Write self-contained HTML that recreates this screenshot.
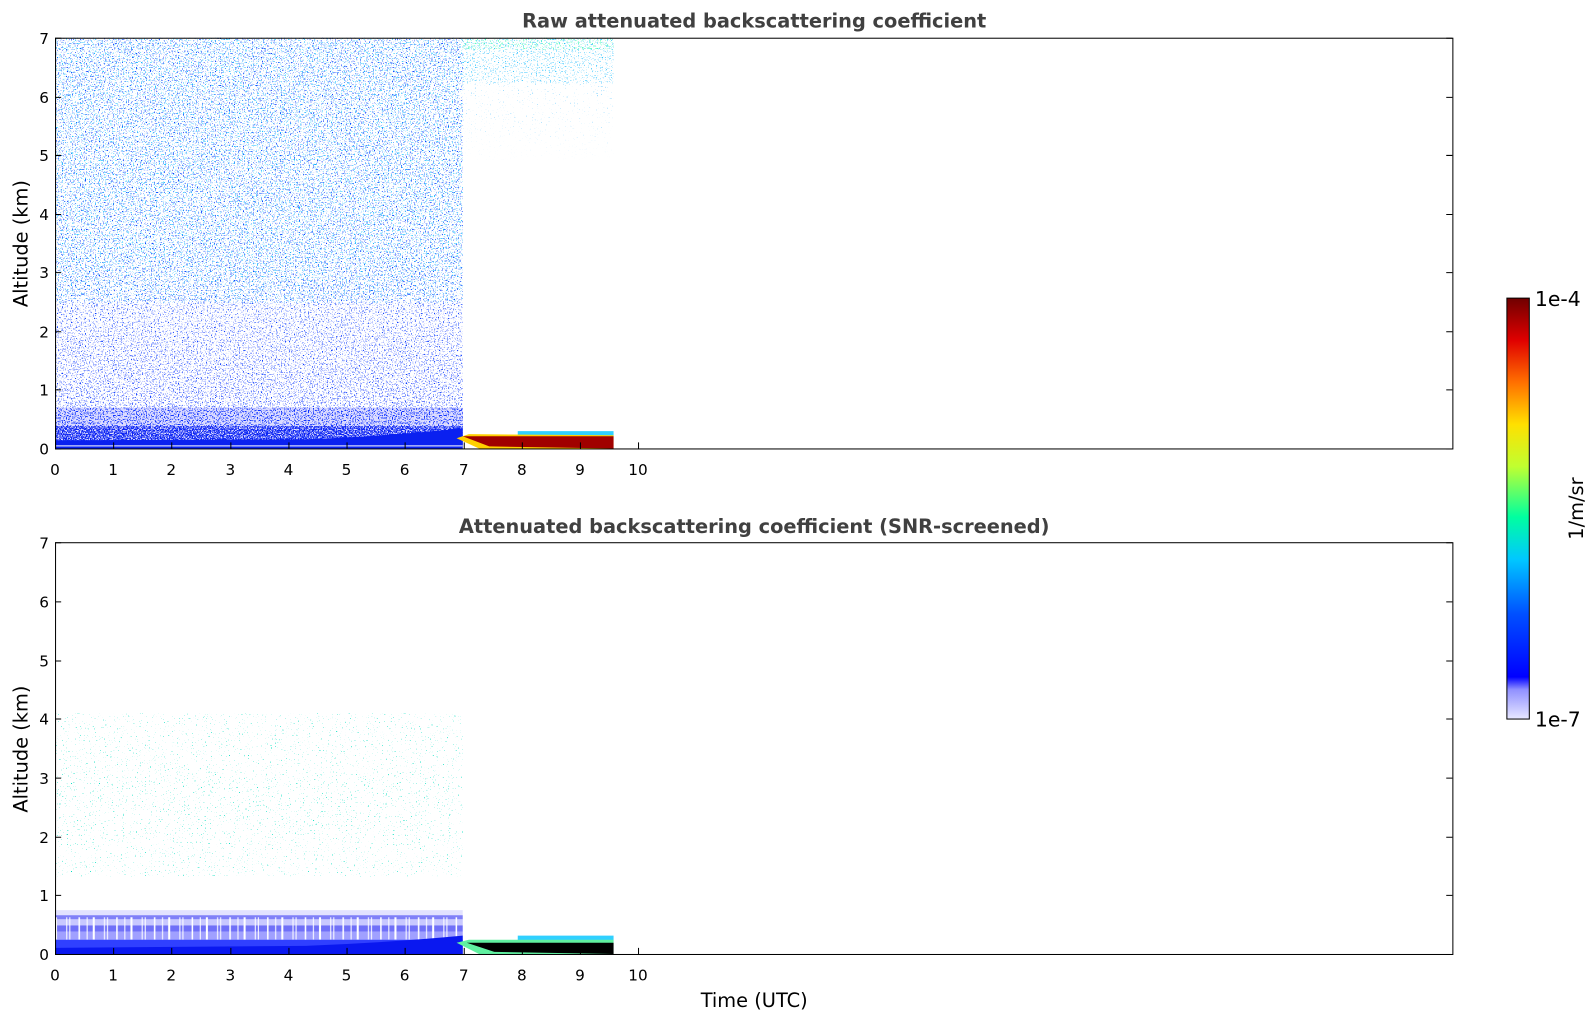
<!DOCTYPE html>
<html><head><meta charset="utf-8"><style>
html,body{margin:0;padding:0;background:#fff;width:1595px;height:1020px;overflow:hidden}
svg text{font-family:"DejaVu Sans","Liberation Sans",sans-serif}
</style></head><body>
<svg width="1595" height="1020" viewBox="0 0 1595 1020" xmlns="http://www.w3.org/2000/svg">
<defs>
<filter id="lo" x="0" y="0" width="100%" height="100%">
<feTurbulence type="fractalNoise" baseFrequency="0.8" numOctaves="1" seed="3" result="n"/>
<feColorMatrix in="n" type="matrix" values="0 0 0 0 0  0 0 0 0 0  0 0 0 0 0  16 0 0 0 -10" result="a"/>
<feComposite in="SourceGraphic" in2="a" operator="in"/>
</filter>
<filter id="lo2" x="0" y="0" width="100%" height="100%">
<feTurbulence type="fractalNoise" baseFrequency="0.8" numOctaves="1" seed="11" result="n"/>
<feColorMatrix in="n" type="matrix" values="0 0 0 0 0  0 0 0 0 0  0 0 0 0 0  16 0 0 0 -10.2" result="a"/>
<feComposite in="SourceGraphic" in2="a" operator="in"/>
</filter>
<filter id="vlo" x="0" y="0" width="100%" height="100%">
<feTurbulence type="fractalNoise" baseFrequency="0.8" numOctaves="1" seed="21" result="n"/>
<feColorMatrix in="n" type="matrix" values="0 0 0 0 0  0 0 0 0 0  0 0 0 0 0  18 0 0 0 -12.5" result="a"/>
<feComposite in="SourceGraphic" in2="a" operator="in"/>
</filter>
<filter id="mid" x="0" y="0" width="100%" height="100%">
<feTurbulence type="fractalNoise" baseFrequency="0.8" numOctaves="1" seed="5" result="n"/>
<feColorMatrix in="n" type="matrix" values="0 0 0 0 0  0 0 0 0 0  0 0 0 0 0  14 0 0 0 -7.6" result="a"/>
<feComposite in="SourceGraphic" in2="a" operator="in"/>
</filter>
<filter id="hi" x="0" y="0" width="100%" height="100%">
<feTurbulence type="fractalNoise" baseFrequency="0.8" numOctaves="1" seed="7" result="n"/>
<feColorMatrix in="n" type="matrix" values="0 0 0 0 0  0 0 0 0 0  0 0 0 0 0  12 0 0 0 -5.5" result="a"/>
<feComposite in="SourceGraphic" in2="a" operator="in"/>
</filter>
<linearGradient id="cb" x1="0" y1="1" x2="0" y2="0">
<stop offset="0" stop-color="#e8e8ff"/><stop offset="0.07" stop-color="#9090ff"/><stop offset="0.1" stop-color="#0000ff"/>
<stop offset="0.25" stop-color="#0050ff"/><stop offset="0.38" stop-color="#00c8ff"/><stop offset="0.48" stop-color="#00ffa0"/>
<stop offset="0.6" stop-color="#c0ff30"/><stop offset="0.7" stop-color="#ffe000"/><stop offset="0.8" stop-color="#ff7000"/>
<stop offset="0.9" stop-color="#e00000"/><stop offset="1" stop-color="#700000"/>
</linearGradient>
<linearGradient id="fade" x1="0" y1="0" x2="0" y2="1">
<stop offset="0" stop-color="#fff" stop-opacity="0"/><stop offset="1" stop-color="#fff" stop-opacity="1"/>
</linearGradient>
<linearGradient id="mk" x1="0" y1="0" x2="0" y2="1">
<stop offset="0" stop-color="#fff" stop-opacity="0"/><stop offset="1" stop-color="#fff" stop-opacity="1"/>
</linearGradient>
<mask id="m1"><rect x="54" y="250" width="400" height="190" fill="url(#mk)"/></mask>
<pattern id="vl" x="0" y="0" width="37" height="10" patternUnits="userSpaceOnUse">
<rect x="3" width="1.5" height="10" fill="#fff"/><rect x="11" width="1" height="10" fill="#fff"/><rect x="17" width="2" height="10" fill="#fff"/><rect x="28" width="1" height="10" fill="#fff"/><rect x="31" width="1" height="10" fill="#fff"/>
</pattern>
</defs>
<g transform="scale(1.0192)">
<!-- Top plot data -->
<g>
<rect x="54" y="37" width="400" height="403" fill="#1040ff" filter="url(#lo)"/>
<rect x="54" y="37" width="400" height="260" fill="#10c0ff" filter="url(#lo2)"/>
<rect x="54" y="37" width="400" height="403" fill="#d0d6ff" filter="url(#vlo)"/>
<rect x="54" y="250" width="400" height="190" fill="#0a28ff" filter="url(#lo2)" mask="url(#m1)"/>
<rect x="54" y="400" width="400" height="40" fill="#dcdcff"/>
<rect x="54" y="400" width="400" height="40" fill="#1030ff" filter="url(#mid)"/>
<rect x="54" y="418" width="400" height="18" fill="#0a20f0" filter="url(#hi)"/>
<path d="M54 432 L300 431 Q380 428 454 420 L454 440 L54 440Z" fill="#0a20f0"/>
<rect x="54" y="437" width="400" height="1" fill="#fff"/>
<rect x="454" y="37" width="148" height="120" fill="#20b0ff" filter="url(#vlo)"/>
<rect x="454" y="37" width="148" height="45" fill="#20c0ff" filter="url(#lo2)"/>
<rect x="454" y="37" width="148" height="12" fill="#40ffb0" filter="url(#lo)"/>
<rect x="454" y="60" width="148" height="100" fill="url(#fade)"/>
<rect x="508" y="423" width="94" height="5" fill="#30d0ff"/>
<path d="M448 430 L460 426 L602 427 L602 440 L470 440Z" fill="#ffd000"/>
<path d="M454 428 L602 428 L602 440 L480 438Z" fill="#a00000"/>
</g>

<!-- Bottom plot data -->
<g>
<rect x="54" y="700" width="400" height="160" fill="#00e0c0" filter="url(#vlo)"/>
<rect x="54" y="760" width="400" height="60" fill="#00e0c0" filter="url(#vlo)"/>
<rect x="54" y="893" width="400" height="40" fill="#e2e2ff"/>
<rect x="54" y="898" width="400" height="4" fill="#8080f8"/>
<rect x="54" y="902" width="400" height="6" fill="#c8c8ff"/>
<rect x="54" y="908" width="400" height="6" fill="#7070f8"/>
<rect x="54" y="914" width="400" height="8" fill="#a0a0ff"/>
<rect x="54" y="900" width="400" height="22" fill="url(#vl)"/>
<rect x="54" y="922" width="400" height="14" fill="#3040ff"/>
<path d="M54 930 L300 928 Q380 925 454 918 L454 936 L54 936Z" fill="#0a18f0"/>
<rect x="508" y="918" width="94" height="6" fill="#30d0ff"/>
<path d="M448 925 L460 922 L602 922 L602 936 L470 936Z" fill="#60f0a0"/>
<path d="M458 925 L602 925 L602 936 L485 934Z" fill="#000"/>
</g>

<rect x="54.5" y="37.5" width="1371" height="403" fill="none" stroke="#000" stroke-width="1"/>
<rect x="54.5" y="532.5" width="1371" height="404" fill="none" stroke="#000" stroke-width="1"/>

<g stroke="#000" stroke-width="1">
<path d="M54.5 440v-6M111.5 440v-6M168.5 440v-6M226.5 440v-6M283.5 440v-6M340.5 440v-6M397.5 440v-6M455.5 440v-6M512.5 440v-6M569.5 440v-6M626.5 440v-6"/>
<path d="M54.5 936v-6M111.5 936v-6M168.5 936v-6M226.5 936v-6M283.5 936v-6M340.5 936v-6M397.5 936v-6M455.5 936v-6M512.5 936v-6M569.5 936v-6M626.5 936v-6"/>
<path d="M54 440.5h6M54 382.5h6M54 325.5h6M54 267.5h6M54 210.5h6M54 152.5h6M54 95.5h6M54 37.5h6"/>
<path d="M1425 440.5h-6M1425 382.5h-6M1425 325.5h-6M1425 267.5h-6M1425 210.5h-6M1425 152.5h-6M1425 95.5h-6M1425 37.5h-6"/>
<path d="M54 936.5h6M54 878.5h6M54 821.5h6M54 763.5h6M54 705.5h6M54 648.5h6M54 590.5h6M54 532.5h6"/>
<path d="M1425 936.5h-6M1425 878.5h-6M1425 821.5h-6M1425 763.5h-6M1425 705.5h-6M1425 648.5h-6M1425 590.5h-6M1425 532.5h-6"/>
</g>

<g font-size="15" fill="#000" text-anchor="middle">
<text x="54" y="466">0</text><text x="111" y="466">1</text><text x="168" y="466">2</text><text x="226" y="466">3</text><text x="283" y="466">4</text><text x="340" y="466">5</text><text x="397" y="466">6</text><text x="455" y="466">7</text><text x="512" y="466">8</text><text x="569" y="466">9</text><text x="626" y="466">10</text>
<text x="54" y="962">0</text><text x="111" y="962">1</text><text x="168" y="962">2</text><text x="226" y="962">3</text><text x="283" y="962">4</text><text x="340" y="962">5</text><text x="397" y="962">6</text><text x="455" y="962">7</text><text x="512" y="962">8</text><text x="569" y="962">9</text><text x="626" y="962">10</text>
</g>
<g font-size="15" fill="#000" text-anchor="end">
<text x="48" y="446">0</text><text x="48" y="388">1</text><text x="48" y="331">2</text><text x="48" y="273">3</text><text x="48" y="216">4</text><text x="48" y="158">5</text><text x="48" y="101">6</text><text x="48" y="43">7</text>
<text x="48" y="942">0</text><text x="48" y="884">1</text><text x="48" y="827">2</text><text x="48" y="769">3</text><text x="48" y="711">4</text><text x="48" y="654">5</text><text x="48" y="596">6</text><text x="48" y="538">7</text>
</g>

<g font-size="19" font-weight="bold" fill="#404040" text-anchor="middle">
<text x="740" y="27">Raw attenuated backscattering coefficient</text>
<text x="740" y="523">Attenuated backscattering coefficient (SNR-screened)</text>
</g>
<g font-size="19" fill="#000" text-anchor="middle">
<text x="740" y="988">Time (UTC)</text>
<text transform="translate(27,239) rotate(-90)">Altitude (km)</text>
<text transform="translate(27,735) rotate(-90)">Altitude (km)</text>
<text transform="translate(1553,499) rotate(-90)">1/m/sr</text>
</g>

<rect x="1478.5" y="292.5" width="22" height="413" fill="url(#cb)" stroke="#000" stroke-width="1"/>
<g font-size="20" fill="#000">
<text x="1506" y="300">1e-4</text>
<text x="1506" y="713">1e-7</text>
</g>
</g>
</svg>
</body></html>
